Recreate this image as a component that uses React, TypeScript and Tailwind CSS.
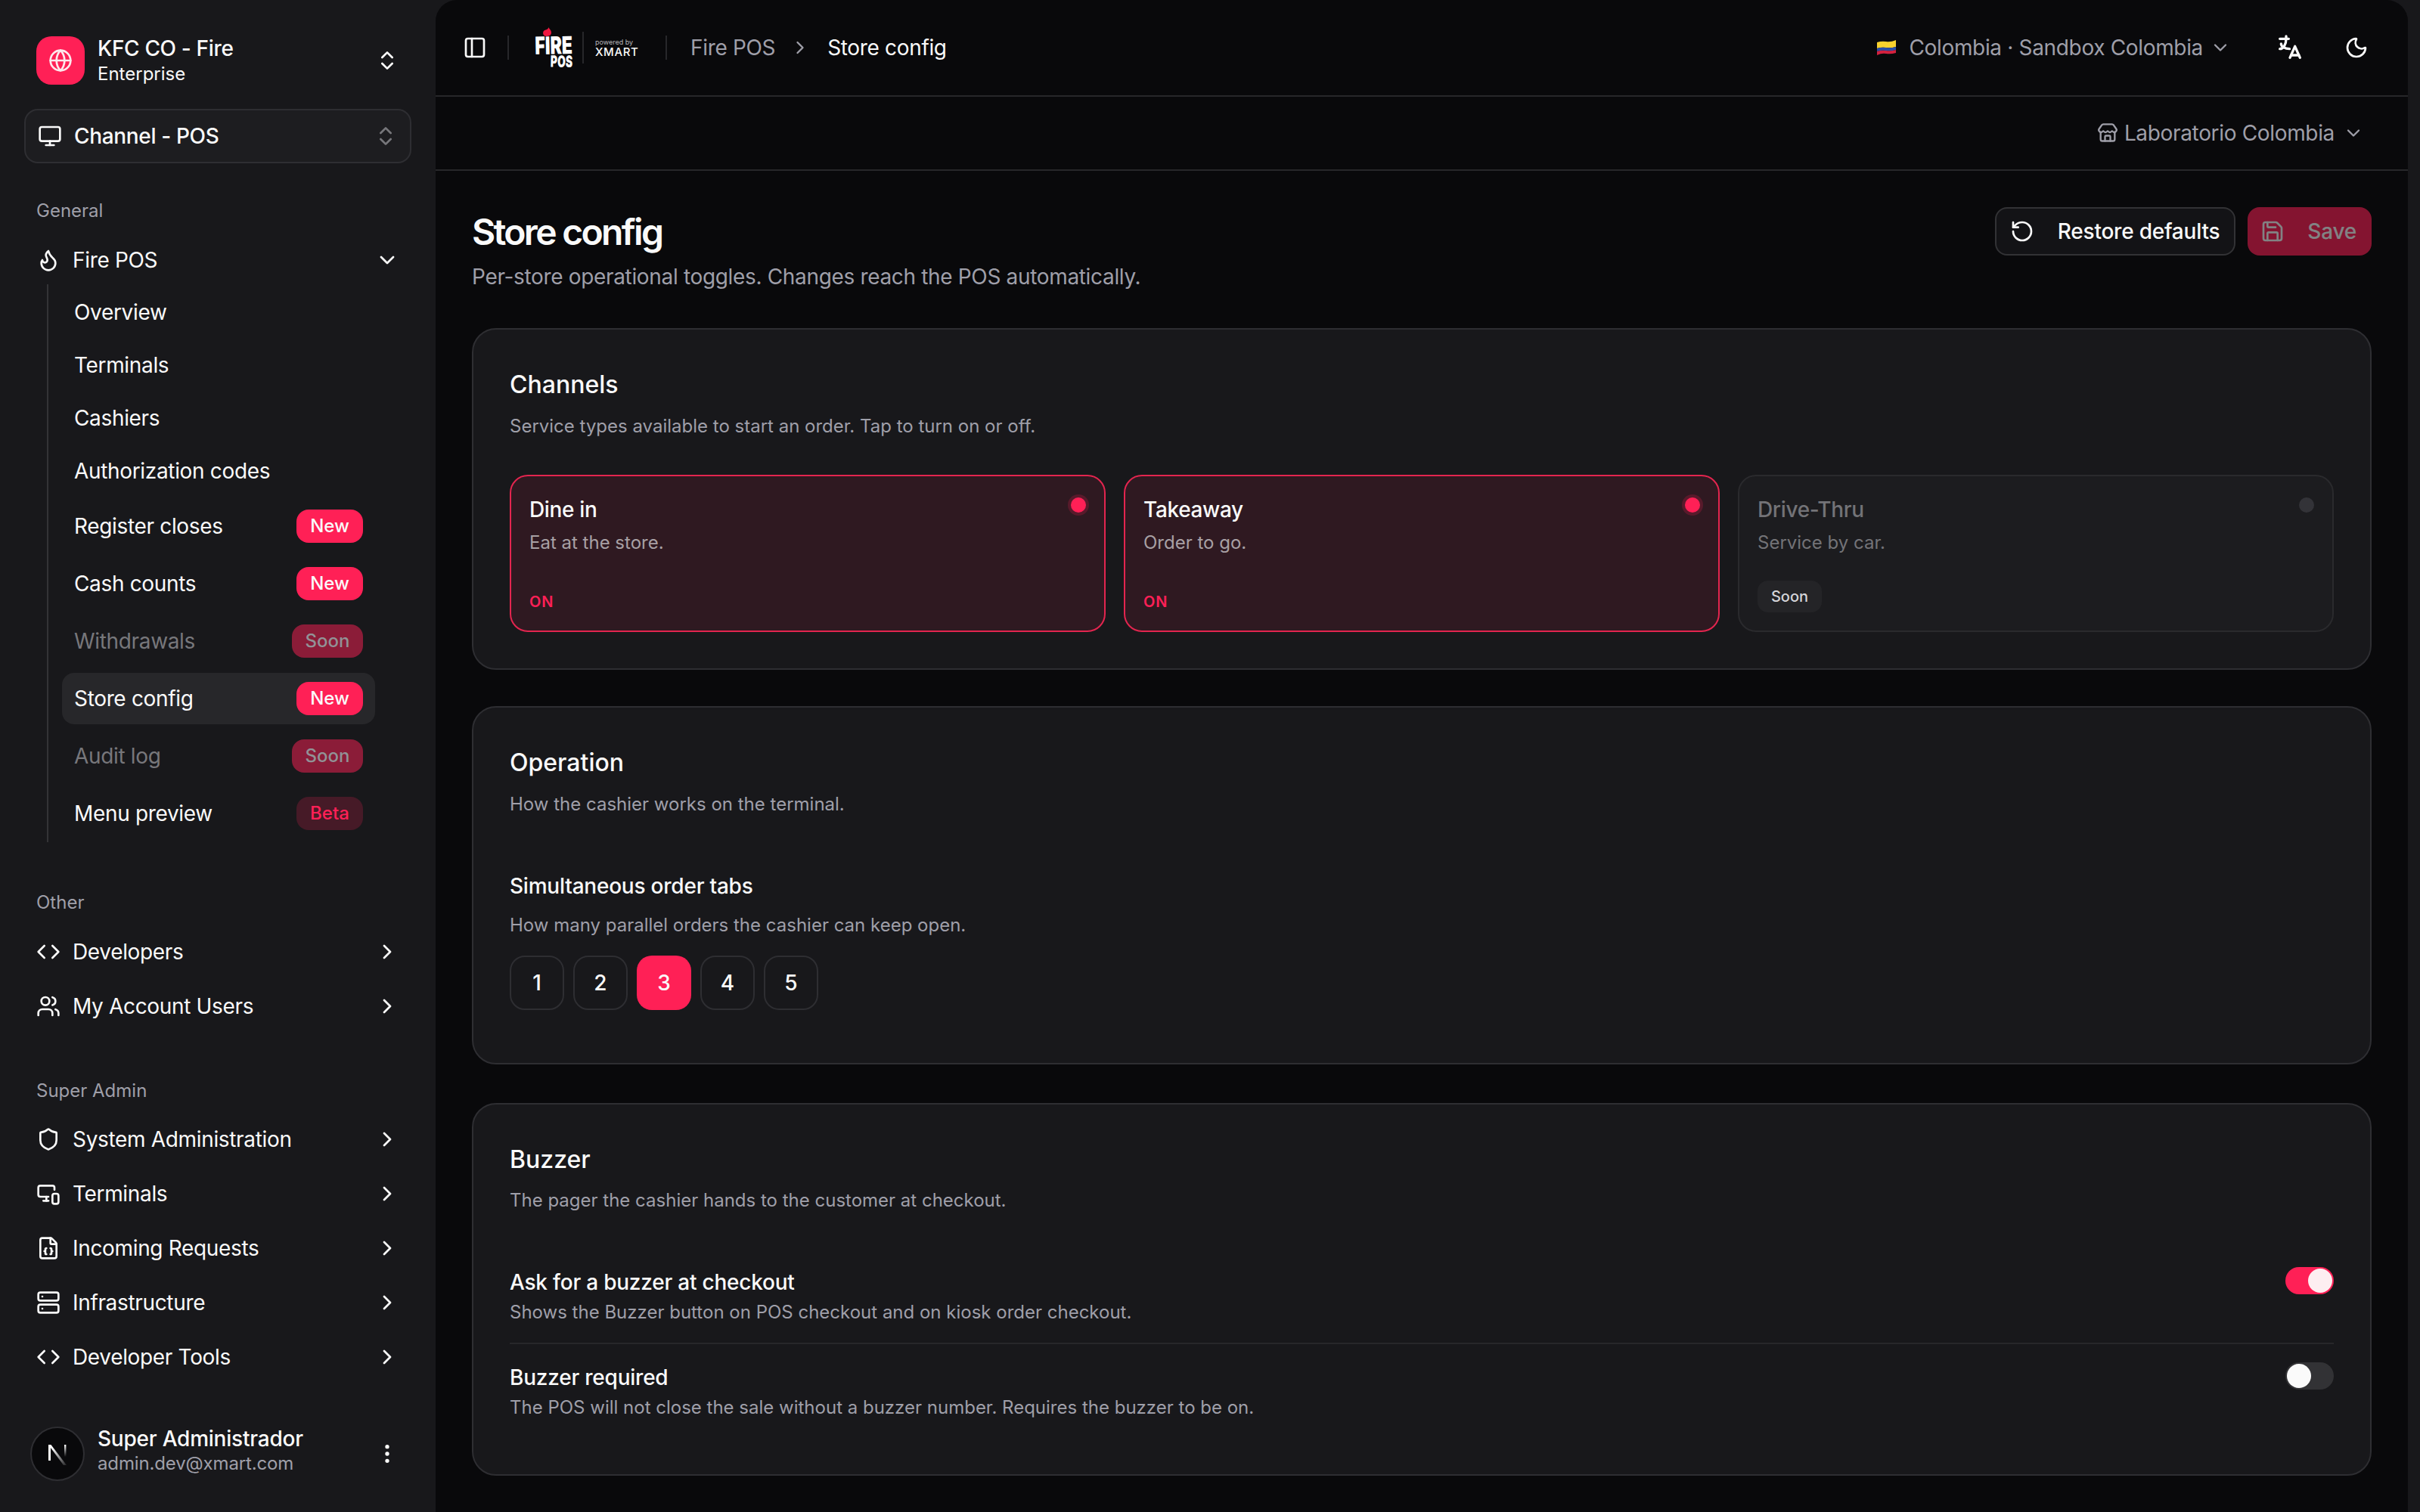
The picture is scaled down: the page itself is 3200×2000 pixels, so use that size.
import type { ReactNode } from "react";
import {
  ChevronDown,
  ChevronRight,
  ChevronsUpDown,
  Code,
  EllipsisVertical,
  FileJson,
  Flame,
  Globe,
  Monitor,
  MonitorSmartphone,
  Moon,
  PanelLeft,
  RotateCcw,
  Save,
  Server,
  Shield,
  Store,
  Users,
} from "lucide-react";
import { TbLanguage } from "react-icons/tb";

const SUB_ITEMS = [
  { label: "Overview" },
  { label: "Terminals" },
  { label: "Cashiers" },
  { label: "Authorization codes" },
];

const NavRow = ({ icon, label, open }: { icon: ReactNode; label: string; open?: boolean }) => (
  <div className="flex h-[68px] items-center gap-4 px-4 text-[28px] leading-[40px] tracking-[-0.012em] text-[#fafafa]">
    <span className="flex h-8 w-8 shrink-0 items-center justify-center">{icon}</span>
    <span className="flex-1">{label}</span>
    {open ? <ChevronDown size={32} strokeWidth={2} /> : <ChevronRight size={32} strokeWidth={2} />}
  </div>
);

const SectionLabel = ({ children }: { children: ReactNode }) => (
  <div className="px-4 text-[24px] leading-[32px] text-[#9f9fa9]">{children}</div>
);

const BadgeRow = ({
  label,
  badge,
  active,
}: {
  label: string;
  badge: "New" | "Soon" | "Beta";
  active?: boolean;
}) => {
  const soon = badge === "Soon";
  return (
    <div className="flex h-[76px] items-center">
      <div
        className={
          active
            ? "flex h-[68px] w-full items-center justify-between rounded-[16px] bg-[#27272a] px-4"
            : "flex h-[68px] w-full items-center justify-between px-4"
        }
      >
        <span
          className={
            soon
              ? "text-[28px] leading-[40px] tracking-[-0.012em] text-[#77777b]"
              : "text-[28px] leading-[40px] tracking-[-0.012em] text-[#fafafa]"
          }
        >
          {label}
        </span>
        {badge === "New" && (
          <span className="flex h-[44px] w-[88px] items-center justify-center rounded-[16px] bg-[#ff2056] text-[24px] font-medium text-[#fafafa]">
            New
          </span>
        )}
        {soon && (
          <span className="flex h-[44px] w-[94px] items-center justify-center rounded-[16px] bg-[#8b1c38] text-[24px] font-medium text-[#929296]">
            Soon
          </span>
        )}
        {badge === "Beta" && (
          <span className="flex h-[44px] w-[88px] items-center justify-center rounded-[16px] bg-[#461a27] text-[24px] font-medium text-[#ff2056]">
            Beta
          </span>
        )}
      </div>
    </div>
  );
};

const Sidebar = () => (
  <aside className="flex h-[2000px] w-[576px] shrink-0 flex-col bg-[#18181b] pt-12 pb-10 text-[#fafafa]">
    <div className="flex h-16 items-center gap-[17px] px-12">
      <div className="flex h-16 w-16 shrink-0 items-center justify-center rounded-[20px] bg-[#ff2056]">
        <Globe size={32} strokeWidth={2} className="text-[#fde8ec]" />
      </div>
      <div className="flex-1">
        <div className="text-[28px] leading-[36px] font-medium tracking-[-0.012em]">KFC CO - Fire</div>
        <div className="text-[24px] leading-[32px]">Enterprise</div>
      </div>
      <ChevronsUpDown size={32} strokeWidth={2} />
    </div>

    <div className="mx-8 mt-8 flex h-[72px] items-center gap-4 rounded-[18px] border-2 border-[#2e2e32] bg-[#1d1d20] pr-4 pl-4">
      <Monitor size={32} strokeWidth={2} />
      <span className="flex-1 text-[28px] leading-[40px] font-medium tracking-[-0.012em]">Channel - POS</span>
      <ChevronsUpDown size={32} strokeWidth={2} className="text-[#77777b]" />
    </div>

    <nav className="mt-[47px] px-8">
      <SectionLabel>General</SectionLabel>
      <div className="mt-[15px]">
        <NavRow icon={<Flame size={32} strokeWidth={2} />} label="Fire POS" open />
      </div>
      <div className="-mt-[2px] ml-[30px] w-[434px] border-l-2 border-[#333336] pt-[2px] pl-[18px]">
        {SUB_ITEMS.map((item) => (
          <div
            key={item.label}
            className="flex h-[70px] items-center px-4 text-[28px] leading-[40px] tracking-[-0.012em] text-[#fafafa]"
          >
            {item.label}
          </div>
        ))}
        <BadgeRow label="Register closes" badge="New" />
        <BadgeRow label="Cash counts" badge="New" />
        <BadgeRow label="Withdrawals" badge="Soon" />
        <BadgeRow label="Store config" badge="New" active />
        <BadgeRow label="Audit log" badge="Soon" />
        <BadgeRow label="Menu preview" badge="Beta" />
      </div>

      <div className="mt-16">
        <SectionLabel>Other</SectionLabel>
      </div>
      <div className="mt-[15px] flex flex-col gap-1">
        <NavRow icon={<Code size={32} strokeWidth={2} />} label="Developers" />
        <NavRow icon={<Users size={32} strokeWidth={2} />} label="My Account Users" />
      </div>

      <div className="mt-[62px]">
        <SectionLabel>Super Admin</SectionLabel>
      </div>
      <div className="mt-[14px] flex flex-col gap-1">
        <NavRow icon={<Shield size={32} strokeWidth={2} />} label="System Administration" />
        <NavRow icon={<MonitorSmartphone size={32} strokeWidth={2} />} label="Terminals" />
        <NavRow icon={<FileJson size={32} strokeWidth={2} />} label="Incoming Requests" />
        <NavRow icon={<Server size={32} strokeWidth={2} />} label="Infrastructure" />
        <NavRow icon={<Code size={32} strokeWidth={2} />} label="Developer Tools" />
      </div>
    </nav>

    <div className="mt-auto flex items-center gap-[17px] pr-12 pl-10">
      <div className="flex h-[72px] w-[72px] shrink-0 items-center justify-center rounded-full border-2 border-[#2e2e32] bg-[#09090b]">
        <svg width="28" height="30" viewBox="0 0 28 30" fill="none">
          <defs>
            <linearGradient id="nextDiag" x1="0" y1="0" x2="1" y2="1">
              <stop offset="0.2" stopColor="#ffffff" />
              <stop offset="1" stopColor="#ffffff" stopOpacity="0.1" />
            </linearGradient>
            <linearGradient id="nextRight" x1="0" y1="0" x2="0" y2="1">
              <stop offset="0" stopColor="#ffffff" />
              <stop offset="0.8" stopColor="#ffffff" stopOpacity="0" />
            </linearGradient>
          </defs>
          <path d="M2 3h3v21H2z" fill="#ffffff" />
          <path d="M2 3h3.4L26 30h-4z" fill="url(#nextDiag)" />
          <path d="M23 3h2.4v20H23z" fill="url(#nextRight)" />
        </svg>
      </div>
      <div className="flex-1 pb-[9px]">
        <div className="text-[28px] leading-[36px] font-medium tracking-[-0.008em]">Super Administrador</div>
        <div className="text-[24px] leading-[30px] tracking-[-0.006em] text-[#9f9fa9]">admin.dev@xmart.com</div>
      </div>
      <EllipsisVertical size={32} strokeWidth={2} />
    </div>
  </aside>
);

const FirePosLogo = () => (
  <div className="flex h-[54px] w-[52px] flex-col">
    <svg width="11" height="12" viewBox="0 0 10 11" className="ml-[13px] shrink-0">
      <path d="M7 0C7 2 10 3 10 6.5 10 9.5 7.5 11 4.5 11 2 11 0 9.5 0 7 0 4.5 2 3.5 4 3 5.5 2.5 6.5 1.5 7 0Z" fill="#f0173f" />
    </svg>
    <div className="flex h-[24px] justify-end">
      <span className="block shrink-0 origin-right scale-x-[0.72] -rotate-1 text-[32px] leading-[24px] font-black whitespace-nowrap text-white">
        FIRE
      </span>
    </div>
    <div className="mt-[2px] flex h-[16px] justify-end">
      <span className="block shrink-0 origin-right scale-x-[0.66] rotate-1 text-[21px] leading-[16px] font-black whitespace-nowrap text-white">
        POS
      </span>
    </div>
  </div>
);

const ColombiaFlag = () => (
  <svg width="25" height="20" viewBox="0 0 25 20">
    <path d="M0 3Q6 1 12 2T25 0V9Q18 11 12 10T0 11Z" fill="#f8d12e" />
    <path d="M0 11Q6 9 12 10T25 9V13Q18 15 12 14T0 15Z" fill="#2a4ea8" />
    <path d="M0 15Q6 13 12 14T25 13V17Q18 19 12 18T0 20Z" fill="#d3213f" />
  </svg>
);

const TopBar = () => (
  <>
    <header className="flex h-[128px] items-center border-b-2 border-[#27272a] pr-[52px] pl-9">
      <PanelLeft size={32} strokeWidth={2} className="text-[#fafafa]" />
      <div className="ml-[27px] h-8 w-[2px] bg-[#27272a]" />
      <div className="ml-[32px]">
        <FirePosLogo />
      </div>
      <div className="ml-[13px] h-[42px] w-[2px] bg-[#27272a]" />
      <div className="ml-[15px] flex w-[62px] flex-col text-[#fafafa]">
        <span className="text-[9px] leading-[10px] whitespace-nowrap text-[#b4b4b8]">powered by</span>
        <span className="mt-[1px] text-[15px] leading-[14px] font-medium tracking-[0.04em]">XMART</span>
      </div>
      <div className="ml-[31px] h-8 w-[2px] bg-[#27272a]" />
      <span className="ml-[31px] text-[28px] leading-[40px] tracking-[-0.012em] text-[#9f9fa9]">Fire POS</span>
      <ChevronRight size={28} strokeWidth={2} className="mr-[22px] ml-[19px] text-[#9f9fa9]" />
      <span className="text-[28px] leading-[40px] tracking-[-0.012em] text-[#fafafa]">Store config</span>

      <div className="ml-auto flex items-center text-[#9f9fa9]">
        <ColombiaFlag />
        <span className="ml-[17px] text-[28px] leading-[40px] tracking-[-0.012em]">Colombia · Sandbox Colombia</span>
        <ChevronDown size={28} strokeWidth={2} className="ml-[9px]" />
      </div>
      <TbLanguage size={40} className="ml-[58px] text-[#fafafa]" />
      <Moon size={32} strokeWidth={2} className="ml-[52px] text-[#fafafa]" />
    </header>
    <div className="flex h-[98px] items-center justify-end border-b-2 border-[#27272a] pr-[58px] text-[#9f9fa9]">
      <Store size={28} strokeWidth={2} />
      <span className="ml-2 text-[28px] leading-[40px] tracking-[-0.012em]">Laboratorio Colombia</span>
      <ChevronDown size={28} strokeWidth={2} className="ml-[11px]" />
    </div>
  </>
);

const CardTitle = ({ title, sub, tight }: { title: string; sub: string; tight?: boolean }) => (
  <>
    <h2 className="text-[32px] leading-[50px] font-medium text-[#fafafa]">{title}</h2>
    <p className={tight ? "mt-[13px] text-[24px] leading-[32px] text-[#9f9fa9]" : "mt-[14px] text-[24px] leading-[32px] text-[#9f9fa9]"}>{sub}</p>
  </>
);

const ChannelTile = ({ title, sub, on }: { title: string; sub: string; on?: boolean }) =>
  on ? (
    <div className="relative flex h-[208px] flex-col rounded-[24px] border-2 border-[#e3254f] bg-[#2f1921] p-6">
      <span className="absolute top-[28px] right-[24px] h-5 w-5 rounded-full bg-[#ff2056] ring-4 ring-[#ff2056]/20" />
      <div className="text-[28px] leading-[40px] font-medium tracking-[-0.012em] text-[#fafafa]">{title}</div>
      <div className="mt-2 text-[24px] leading-[32px] text-[#a8a0a4]">{sub}</div>
      <div className="mt-auto text-[20px] leading-[28px] font-semibold tracking-[0.05em] text-[#ff2056]">ON</div>
    </div>
  ) : (
    <div className="relative flex h-[208px] flex-col rounded-[24px] border-2 border-[#2a2a2d] bg-[#1c1c1f] p-6">
      <span className="absolute top-[28px] right-[24px] h-5 w-5 rounded-full bg-[#333338]" />
      <div className="text-[28px] leading-[40px] font-medium tracking-[-0.012em] text-[#737377]">{title}</div>
      <div className="mt-2 text-[24px] leading-[32px] text-[#737377]">{sub}</div>
      <span className="mt-auto flex h-[42px] w-[85px] items-center justify-center rounded-[14px] bg-[#242427] text-[20px] font-medium text-[#d4d4d8]">
        Soon
      </span>
    </div>
  );

const Toggle = ({ on }: { on?: boolean }) =>
  on ? (
    <div className="flex h-9 w-16 shrink-0 items-center justify-end rounded-full bg-[#ff2056] p-[2px]">
      <div className="h-8 w-8 rounded-full bg-[#fdeef1]" />
    </div>
  ) : (
    <div className="flex h-9 w-16 shrink-0 items-center rounded-full bg-[#323235] p-[2px]">
      <div className="h-8 w-8 rounded-full bg-[#fafafa]" />
    </div>
  );

const ToggleRow = ({ title, sub, on, border }: { title: string; sub: string; on?: boolean; border?: boolean }) => (
  <div className={border ? "flex items-start justify-between border-b-2 border-[#27272a] py-6" : "flex items-start justify-between py-6"}>
    <div>
      <div className="text-[28px] leading-[40px] font-medium tracking-[-0.008em] text-[#fafafa]">{title}</div>
      <div className="mt-1 text-[24px] leading-[32px] text-[#9f9fa9]">{sub}</div>
    </div>
    <Toggle on={on} />
  </div>
);

const Content = () => (
  <div className="px-12 pt-12">
    <div className="flex items-start justify-between">
      <div>
        <h1 className="text-[48px] leading-[66px] font-semibold tracking-[-0.056em] text-[#fafafa]">Store config</h1>
        <p className="mt-[6px] text-[28px] leading-[40px] tracking-[-0.012em] text-[#9f9fa9]">
          Per-store operational toggles. Changes reach the POS automatically.
        </p>
      </div>
      <div className="flex gap-4">
        <button className="flex h-16 items-center gap-[31px] rounded-[16px] border-2 border-[#323235] bg-[#131316] pr-[19px] pl-[18px] text-[28px] font-medium tracking-[-0.008em] text-[#fafafa]">
          <RotateCcw size={32} strokeWidth={2} />
          Restore defaults
        </button>
        <button className="flex h-16 items-center gap-[30px] rounded-[16px] bg-[#ff2056] pr-[20px] pl-[17px] text-[28px] font-medium tracking-[-0.008em] text-[#fafafa] opacity-50">
          <Save size={32} strokeWidth={2} />
          Save
        </button>
      </div>
    </div>

    <div className="mt-12 flex flex-col gap-12">
      <section className="rounded-[32px] border-2 border-[#2e2e32] bg-[#18181b] p-12">
        <CardTitle title="Channels" sub="Service types available to start an order. Tap to turn on or off." />
        <div className="mt-12 grid grid-cols-3 gap-6">
          <ChannelTile title="Dine in" sub="Eat at the store." on />
          <ChannelTile title="Takeaway" sub="Order to go." on />
          <ChannelTile title="Drive-Thru" sub="Service by car." />
        </div>
      </section>

      <section className="rounded-[32px] border-2 border-[#2e2e32] bg-[#18181b] px-12 pt-12 pb-[46px]">
        <CardTitle title="Operation" sub="How the cashier works on the terminal." />
        <div className="mt-12 py-6">
          <div className="text-[28px] leading-[40px] font-medium tracking-[-0.008em] text-[#fafafa]">Simultaneous order tabs</div>
          <div className="mt-4 text-[24px] leading-[32px] text-[#9f9fa9]">How many parallel orders the cashier can keep open.</div>
          <div className="mt-6 flex gap-3">
            {[1, 2, 3, 4, 5].map((n) => (
              <div
                key={n}
                className={
                  n === 3
                    ? "flex h-[72px] w-[72px] items-center justify-center rounded-[20px] bg-[#ff2056] text-[28px] font-medium text-[#fafafa]"
                    : "flex h-[72px] w-[72px] items-center justify-center rounded-[20px] border-2 border-[#2e2e32] bg-[#18181b] text-[28px] font-medium text-[#fafafa]"
                }
              >
                {n}
              </div>
            ))}
          </div>
        </div>
      </section>

      <section className="mt-[3px] rounded-[32px] border-2 border-[#2e2e32] bg-[#18181b] p-12">
        <CardTitle title="Buzzer" sub="The pager the cashier hands to the customer at checkout." tight />
        <div className="mt-12">
          <ToggleRow
            title="Ask for a buzzer at checkout"
            sub="Shows the Buzzer button on POS checkout and on kiosk order checkout."
            on
            border
          />
          <ToggleRow
            title="Buzzer required"
            sub="The POS will not close the sale without a buzzer number. Requires the buzzer to be on."
          />
        </div>
      </section>
    </div>
  </div>
);

export default function App() {
  return (
    <div className="flex h-[2000px] w-full overflow-hidden bg-[#18181b] pr-4 [font-family:Inter,sans-serif]">
      <Sidebar />
      <main className="h-[2000px] min-w-0 flex-1 overflow-hidden rounded-t-[28px] bg-[#09090b]">
        <TopBar />
        <Content />
      </main>
    </div>
  );
}
